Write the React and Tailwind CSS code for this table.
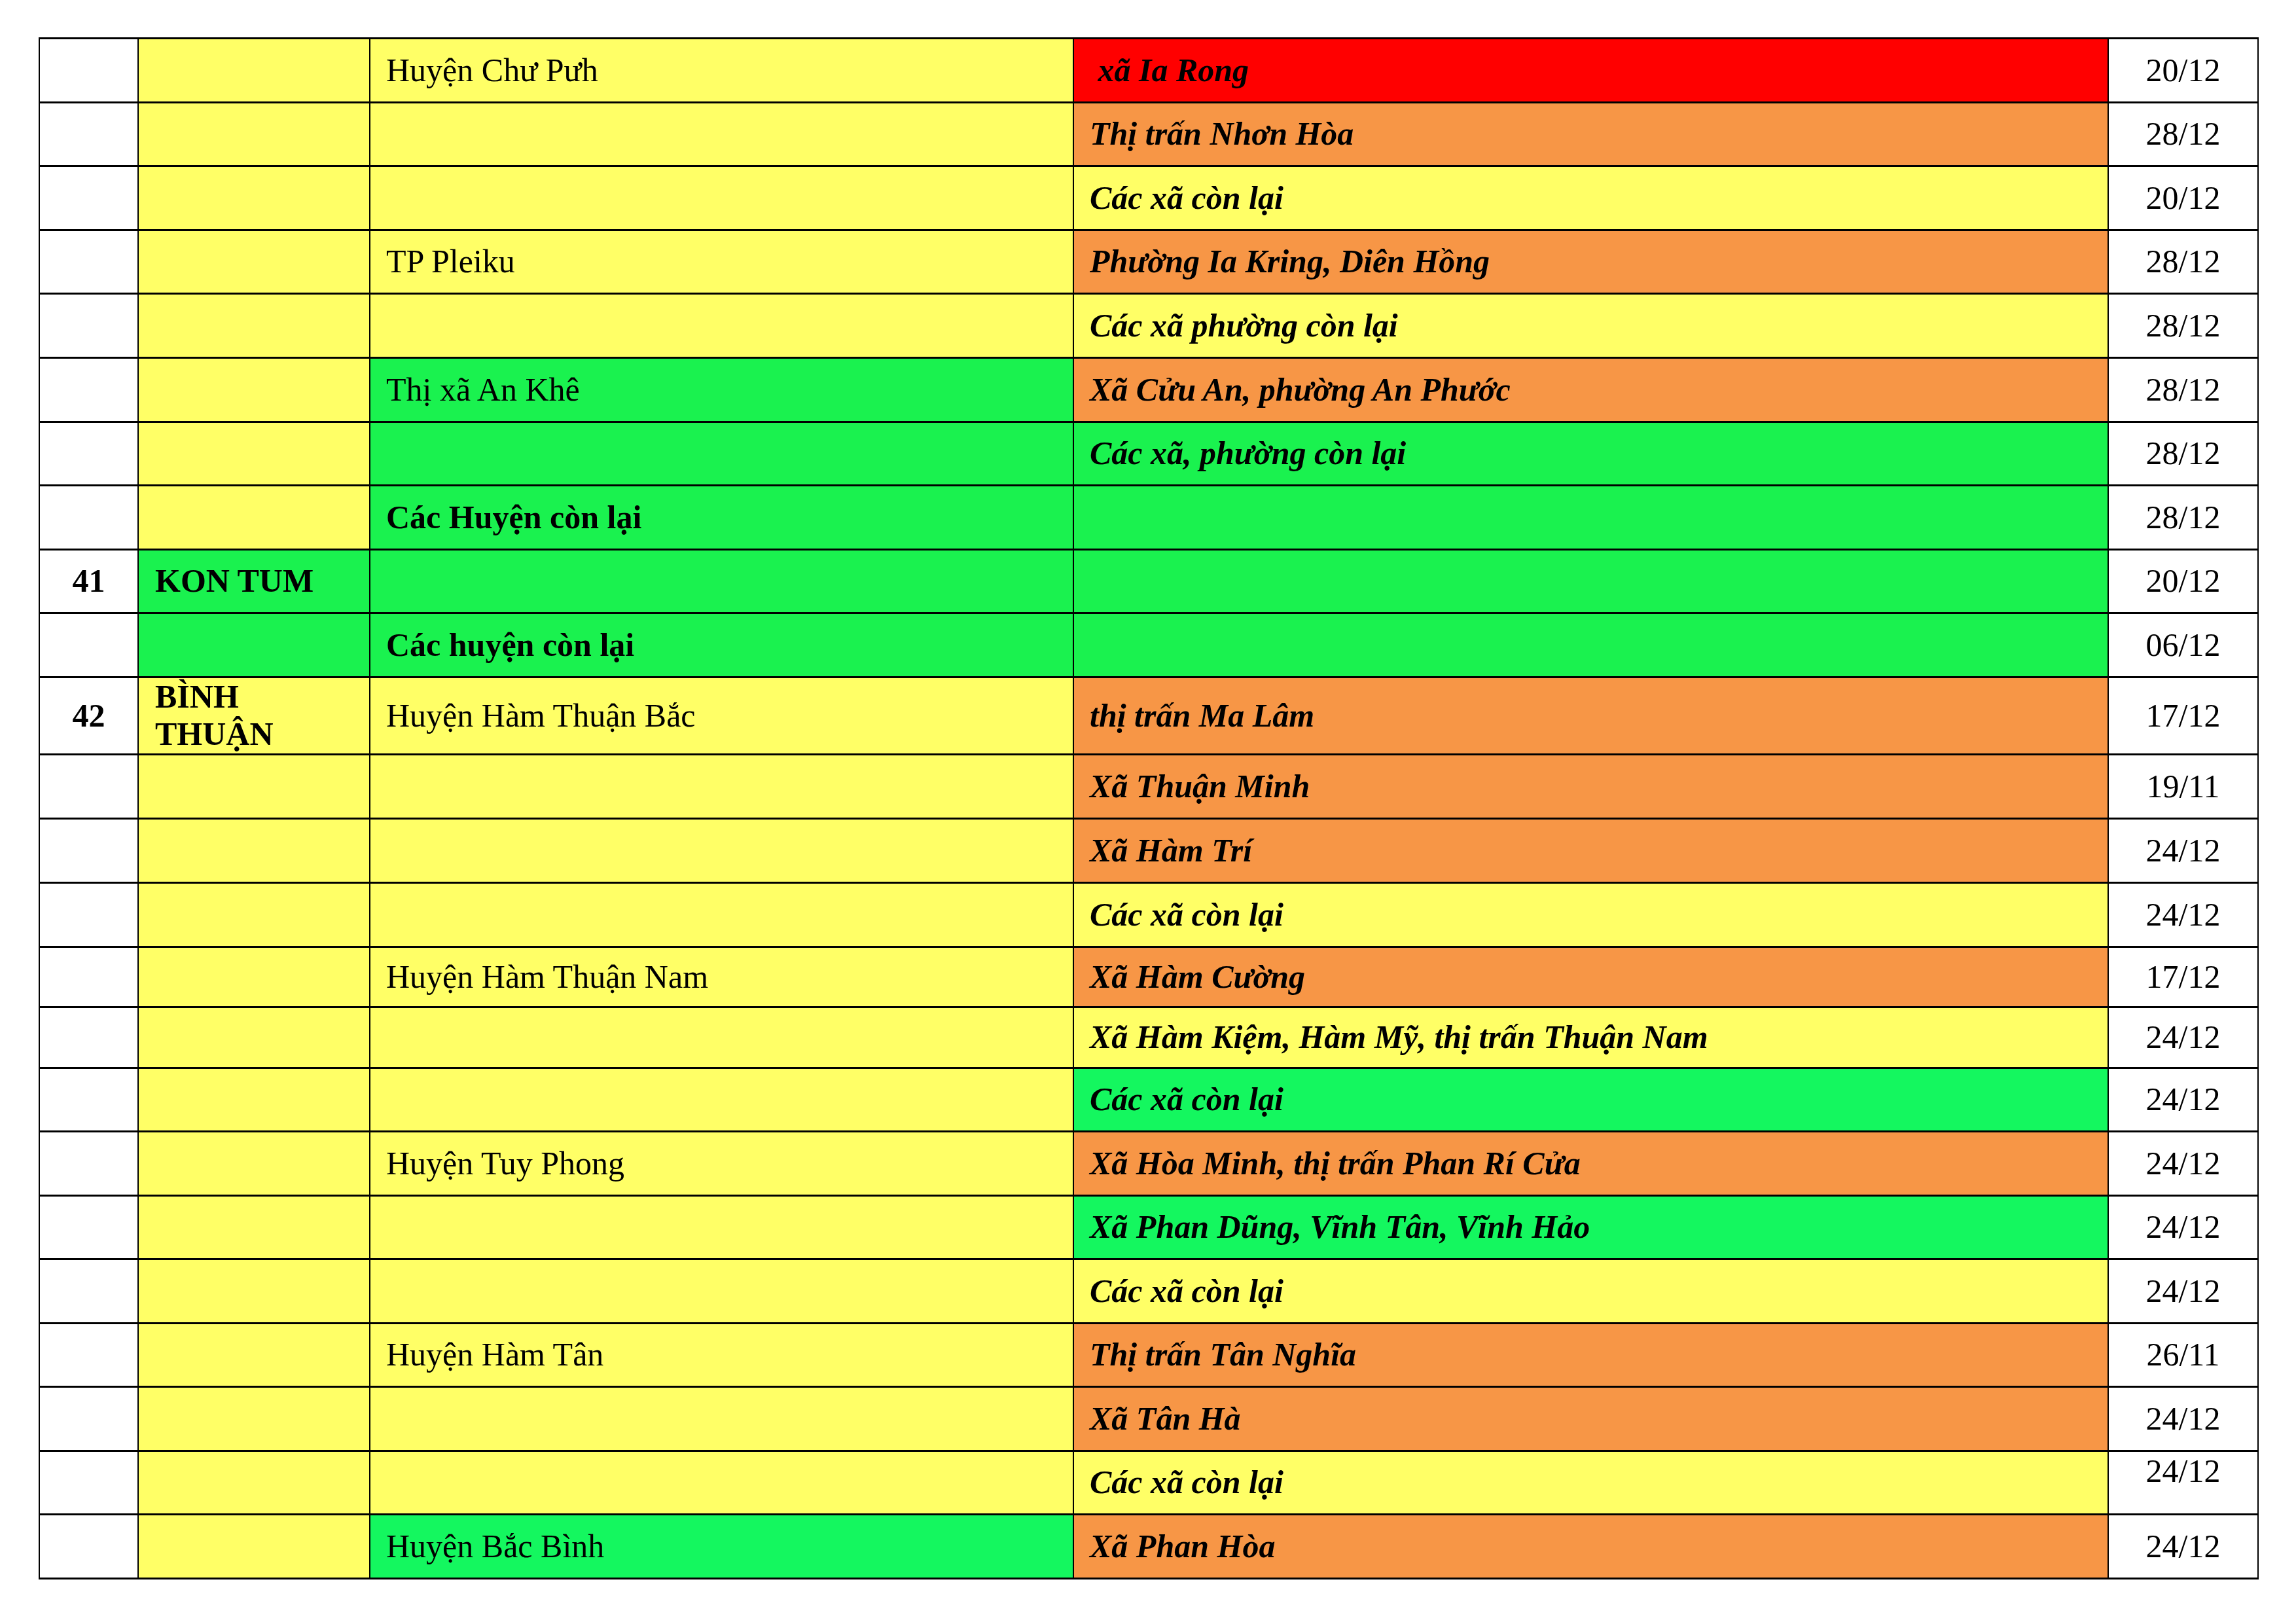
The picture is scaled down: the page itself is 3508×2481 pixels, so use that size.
import React from "react";

const Y = "bg-[#ffff66]";
const O = "bg-[#f79646]";
const G = "bg-[#1af24f]";
const G2 = "bg-[#14f75f]";
const R = "bg-[#ff0000]";
const W = "bg-white";

const rows = [
  { h: "h-[97.6px]", n: "", c2: Y, p: "", c3: Y, d: "Huyện Chư Pưh", c4: R, x: "\u00a0xã Ia Rong", t: "20/12" },
  { h: "h-[97.6px]", n: "", c2: Y, p: "", c3: Y, d: "", c4: O, x: "Thị trấn Nhơn Hòa", t: "28/12" },
  { h: "h-[97.6px]", n: "", c2: Y, p: "", c3: Y, d: "", c4: Y, x: "Các xã còn lại", t: "20/12" },
  { h: "h-[97.6px]", n: "", c2: Y, p: "", c3: Y, d: "TP Pleiku", c4: O, x: "Phường Ia Kring, Diên Hồng", t: "28/12" },
  { h: "h-[97.6px]", n: "", c2: Y, p: "", c3: Y, d: "", c4: Y, x: "Các xã phường còn lại", t: "28/12" },
  { h: "h-[97.6px]", n: "", c2: Y, p: "", c3: G, d: "Thị xã An Khê", c4: O, x: "Xã Cửu An, phường An Phước", t: "28/12" },
  { h: "h-[97.6px]", n: "", c2: Y, p: "", c3: G, d: "", c4: G, x: "Các xã, phường còn lại", t: "28/12" },
  { h: "h-[97.6px]", n: "", c2: Y, p: "", c3: G, d: "Các Huyện còn lại", db: true, c4: G, x: "", t: "28/12" },
  { h: "h-[97.6px]", n: "41", c2: G, p: "KON TUM", c3: G, d: "", c4: G, x: "", t: "20/12" },
  { h: "h-[97.6px]", n: "", c2: G, p: "", c3: G, d: "Các huyện còn lại", db: true, c4: G, x: "", t: "06/12" },
  { h: "h-[116.3px]", n: "42", c2: Y, p: "BÌNH THUẬN", c3: Y, d: "Huyện Hàm Thuận Bắc", c4: O, x: "thị trấn Ma Lâm", t: "17/12" },
  { h: "h-[98px]", n: "", c2: Y, p: "", c3: Y, d: "", c4: O, x: "Xã Thuận Minh", t: "19/11" },
  { h: "h-[98px]", n: "", c2: Y, p: "", c3: Y, d: "", c4: O, x: "Xã Hàm Trí", t: "24/12" },
  { h: "h-[98px]", n: "", c2: Y, p: "", c3: Y, d: "", c4: Y, x: "Các xã còn lại", t: "24/12" },
  { h: "h-[92.5px]", n: "", c2: Y, p: "", c3: Y, d: "Huyện Hàm Thuận Nam", c4: O, x: "Xã Hàm Cường", t: "17/12" },
  { h: "h-[92.5px]", n: "", c2: Y, p: "", c3: Y, d: "", c4: Y, x: "Xã Hàm Kiệm, Hàm Mỹ, thị trấn Thuận Nam", t: "24/12" },
  { h: "h-[97.5px]", n: "", c2: Y, p: "", c3: Y, d: "", c4: G2, x: "Các xã còn lại", t: "24/12" },
  { h: "h-[97.5px]", n: "", c2: Y, p: "", c3: Y, d: "Huyện Tuy Phong", c4: O, x: "Xã Hòa Minh, thị trấn Phan Rí Cửa", t: "24/12" },
  { h: "h-[97.5px]", n: "", c2: Y, p: "", c3: Y, d: "", c4: G2, x: "Xã Phan Dũng, Vĩnh Tân, Vĩnh Hảo", t: "24/12" },
  { h: "h-[97.5px]", n: "", c2: Y, p: "", c3: Y, d: "", c4: Y, x: "Các xã còn lại", t: "24/12" },
  { h: "h-[97.5px]", n: "", c2: Y, p: "", c3: Y, d: "Huyện Hàm Tân", c4: O, x: "Thị trấn Tân Nghĩa", t: "26/11" },
  { h: "h-[97.5px]", n: "", c2: Y, p: "", c3: Y, d: "", c4: O, x: "Xã Tân Hà", t: "24/12" },
  { h: "h-[97.5px]", n: "", c2: Y, p: "", c3: Y, d: "", c4: Y, x: "Các xã còn lại", t: "24/12", top: true },
  { h: "h-[97.5px]", n: "", c2: Y, p: "", c3: G2, d: "Huyện Bắc Bình", c4: O, x: "Xã Phan Hòa", t: "24/12" },
];

const cell = "border-x-2 border-y-[3px] border-black align-middle p-0";

export default function App() {
  return (
    <div className="w-[3508px] h-[2481px] bg-white pt-[57px] pl-[59px]" style={{ fontFamily: '"Liberation Serif", "Times New Roman", serif' }}>
      <table className="table-fixed border-collapse w-[3390px] text-[50px] leading-[1.15] text-black" style={{ fontFamily: '"Liberation Serif", "Times New Roman", serif' }}>
        <colgroup>
          <col className="w-[151px]" />
          <col className="w-[354px]" />
          <col className="w-[1075px]" />
          <col className="w-[1581px]" />
          <col className="w-[229px]" />
        </colgroup>
        <tbody>
          {rows.map((r, i) => (
            <tr key={i} className={r.h}>
              <td className={`${cell} ${W} text-center font-bold`}>{r.n}</td>
              <td className={`${cell} ${r.c2} pl-[25px] font-bold`}>
                {r.p === "BÌNH THUẬN" ? (
                  <>
                    BÌNH
                    <br />
                    THUẬN
                  </>
                ) : (
                  r.p
                )}
              </td>
              <td className={`${cell} ${r.c3} pl-[24px] ${r.db ? "font-bold" : ""}`}>{r.d}</td>
              <td className={`${cell} ${r.c4} pl-[24px] font-bold italic whitespace-nowrap`}>{r.x}</td>
              <td className={`${cell} ${W} text-center ${r.top ? "!align-top pt-[1px]" : ""}`}>{r.t}</td>
            </tr>
          ))}
        </tbody>
      </table>
    </div>
  );
}
